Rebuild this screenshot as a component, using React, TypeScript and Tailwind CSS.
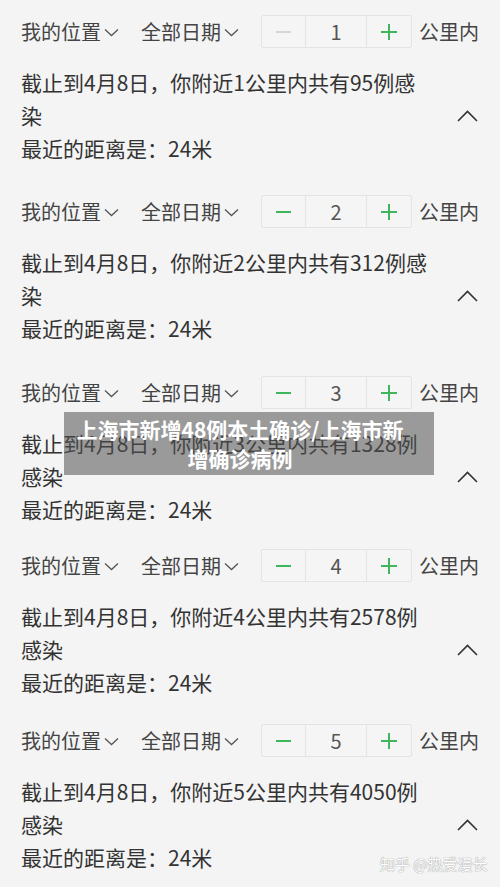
const blocks = [
  { km: 1, count: 95, minusOff: true, pt: 'pt-[15px]' },
  { km: 2, count: 312, minusOff: false, pt: 'pt-[30px]' },
  { km: 3, count: 1328, minusOff: false, pt: 'pt-[31px]' },
  { km: 4, count: 2578, minusOff: false, pt: 'pt-[23px]' },
  { km: 5, count: 4050, minusOff: false, pt: 'pt-[25px]' },
]

function ChevronDown() {
  return (
    <svg width="15" height="9" viewBox="0 0 15 9" className="ml-[3px] mt-[2px]">
      <path d="M1 1.5 L7.5 7.5 L14 1.5" fill="none" stroke="#555" strokeWidth="1.3" />
    </svg>
  )
}

function ChevronUp() {
  return (
    <svg width="21" height="12" viewBox="0 0 21 12">
      <path d="M1 11 L10.5 1.5 L20 11" fill="none" stroke="#333" strokeWidth="1.6" />
    </svg>
  )
}

function Block({ km, count, minusOff, pt }: { km: number; count: number; minusOff: boolean; pt: string }) {
  return (
    <div className={pt}>
      <div className="flex items-center h-[33px] text-[20px] text-[#444]">
        <div className="flex items-center">
          我的位置
          <ChevronDown />
        </div>
        <div className="flex items-center ml-[22px]">
          全部日期
          <ChevronDown />
        </div>
        <div className="flex h-[33px] ml-[22px] border border-[#e4e4e4] rounded-[2px] bg-[#f5f5f5]">
          <div className="w-[44px] flex items-center justify-center border-r border-[#e4e4e4]">
            <div className={minusOff ? 'w-[15px] h-[2px] bg-[#d6d6d6]' : 'w-[15px] h-[2px] bg-[#3fb65c]'} />
          </div>
          <div className="w-[61px] flex items-center justify-center border-r border-[#e4e4e4] text-[20px] text-[#555]">
            {km}
          </div>
          <div className="w-[44px] flex items-center justify-center relative">
            <div className="w-[16px] h-[2px] bg-[#3fb65c]" />
            <div className="absolute w-[2px] h-[16px] bg-[#3fb65c]" />
          </div>
        </div>
        <div className="ml-[7px]">公里内</div>
      </div>
      <div className="mt-[18px] flex justify-between text-[21px] leading-[33px] text-[#333] pr-[22px]">
        <div className="w-[412px]">
          截止到4月8日，你附近{km}公里内共有{count}例感染
        </div>
        <div className="h-[33px] mt-[33px] flex items-center">
          <ChevronUp />
        </div>
      </div>
      <div className="text-[21px] leading-[33px] text-[#333]">最近的距离是：24米</div>
    </div>
  )
}

export default function App() {
  return (
    <div
      className="relative w-[500px] h-[887px] overflow-hidden bg-[#f4f4f4] pl-[21px]"
      style={{ fontFamily: '"Noto Sans CJK SC", "Noto Sans", sans-serif' }}
    >
      {blocks.map(b => (
        <Block key={b.km} {...b} />
      ))}

      <div className="absolute left-[64px] top-[412px] w-[370px] h-[63px] bg-[rgba(80,80,80,0.55)] flex items-center justify-center pr-[18px]">
        <div className="text-white font-bold text-[21px] leading-[29px] text-center">
          上海市新增48例本土确诊/上海市新
          <br />
          增确诊病例
        </div>
      </div>

      <div className="absolute left-[380px] top-[853px] text-[15px] text-white [text-shadow:0_0_1px_#999,0_0_1px_#999]">
        知乎 @热爱漫长
      </div>
    </div>
  )
}
